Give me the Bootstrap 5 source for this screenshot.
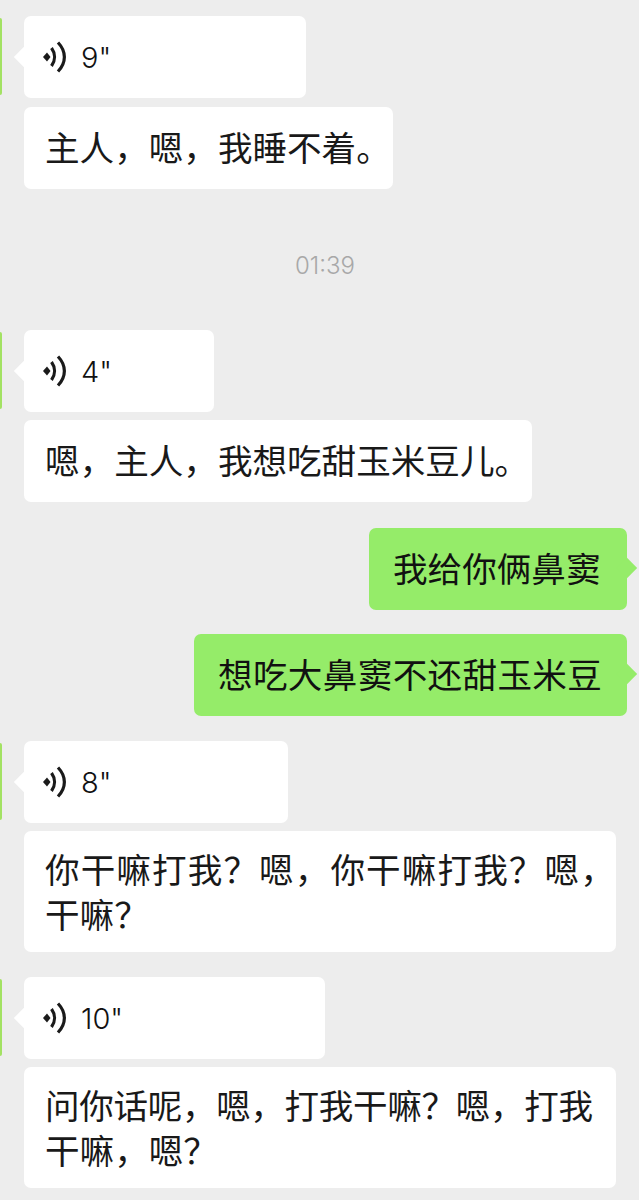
<!DOCTYPE html>
<html lang="zh"><head><meta charset="utf-8"><title>Chat</title>
<link href="https://cdn.jsdelivr.net/npm/bootstrap@5.3.0/dist/css/bootstrap.min.css" rel="stylesheet">
<style>
html,body{background:#ededed;}
body{width:639px;height:1200px;overflow:hidden;font-family:"Noto Sans CJK SC","Noto Sans",sans-serif;color:#191919;}
.chat-wrap{padding-top:16px;}
.msg-row{min-height:82px;}
.msg-in{padding-left:0;padding-right:23px;}
.msg-out{padding-right:12px;justify-content:flex-end;}
.avatar-sliver{width:2px;flex:0 0 2px;margin-right:22px;align-self:flex-start;height:77px;margin-top:2px;background:#a3e263;border-radius:0 3px 3px 0;}
.avatar-gap{width:2px;flex:0 0 2px;margin-right:22px;}
.bubble{position:relative;background:#fff;border-radius:7px;font-size:34.6px;line-height:45px;padding:17px 0 20px 21px;white-space:nowrap;}
.bubble-fit{width:369px;}
.bubble-fit2{width:508px;}
.bubble-multi{padding:15px 0 16px 21px;width:592px;}
.line-wide{letter-spacing:1.1px;}
.line-tight{letter-spacing:-.35px;}
.line-mid{letter-spacing:.35px;}
.bubble-out{background:#95ec69;padding:17px 0 19px 24px;color:#111;}
.w-o1{width:258px}.w-o2{width:433px}
.tail::before{content:"";position:absolute;left:-10px;top:31px;width:20px;height:20px;background:#fff;transform:rotate(45deg) scale(.72);}
.bubble-out::after{content:"";position:absolute;right:-10px;top:30px;width:20px;height:20px;background:#95ec69;transform:rotate(45deg) scale(.72);}
.voice{display:flex;align-items:center;height:45px;padding-top:2px;font-family:"Inter","Noto Sans CJK SC",sans-serif;font-size:29px;font-weight:300;margin-left:-2px;color:#111;}
.voice svg{margin-right:15px;margin-top:-2px;flex:none;}
.w-v1{width:282px}.w-v2{width:190px}.w-v3{width:264px}.w-v4{width:301px}
.bubble.tail{padding:18px 0 19px 21px;}
.gap-8{margin-top:9px}.gap-8b{margin-top:8px}
.time-stamp{text-align:center;font-family:"Inter",sans-serif;font-weight:300;color:#a8a8a8;font-size:24px;line-height:32px;margin-top:61px;margin-bottom:48px;padding-left:11px;}
.gap-out1{margin-top:26px}.gap-out2{margin-top:24px}.gap-out3{margin-top:25px}
</style></head>
<body>
<main class="chat-wrap d-flex flex-column">
  <div class="msg-row msg-in d-flex"><div class="avatar-sliver"></div>
    <div class="bubble tail w-v1"><div class="voice"><svg width="23" height="32" viewBox="0 0 23 32" fill="none" stroke="#1a1a1a" stroke-width="3.2"><path d="M0 16 4 11.5 7.5 16 4 20.5Z" fill="#1a1a1a" stroke="none"/><path d="M8.5 7C12.5 12.5 12.5 19.5 8.5 25"/><path d="M15 1.5C23.5 10.5 23.5 21.5 15 30.5"/></svg>9"</div></div></div>
  <div class="msg-row msg-in d-flex gap-8"><div class="avatar-gap"></div>
    <div class="bubble bubble-fit">主人，嗯，我睡不着。</div></div>

  <div class="time-stamp">01:39</div>

  <div class="msg-row msg-in d-flex"><div class="avatar-sliver"></div>
    <div class="bubble tail w-v2"><div class="voice"><svg width="23" height="32" viewBox="0 0 23 32" fill="none" stroke="#1a1a1a" stroke-width="3.2"><path d="M0 16 4 11.5 7.5 16 4 20.5Z" fill="#1a1a1a" stroke="none"/><path d="M8.5 7C12.5 12.5 12.5 19.5 8.5 25"/><path d="M15 1.5C23.5 10.5 23.5 21.5 15 30.5"/></svg>4"</div></div></div>
  <div class="msg-row msg-in d-flex gap-8b"><div class="avatar-gap"></div>
    <div class="bubble bubble-fit2">嗯，主人，我想吃甜玉米豆儿。</div></div>

  <div class="msg-row msg-out d-flex gap-out1"><div class="bubble bubble-out w-o1">我给你俩鼻窦</div></div>
  <div class="msg-row msg-out d-flex gap-out2"><div class="bubble bubble-out w-o2 line-mid">想吃大鼻窦不还甜玉米豆</div></div>

  <div class="msg-row msg-in d-flex gap-out3"><div class="avatar-sliver"></div>
    <div class="bubble tail w-v3"><div class="voice"><svg width="23" height="32" viewBox="0 0 23 32" fill="none" stroke="#1a1a1a" stroke-width="3.2"><path d="M0 16 4 11.5 7.5 16 4 20.5Z" fill="#1a1a1a" stroke="none"/><path d="M8.5 7C12.5 12.5 12.5 19.5 8.5 25"/><path d="M15 1.5C23.5 10.5 23.5 21.5 15 30.5"/></svg>8"</div></div></div>
  <div class="msg-row msg-in d-flex gap-8b"><div class="avatar-gap"></div>
    <div class="bubble bubble-multi"><div class="line-wide">你干嘛打我？嗯，你干嘛打我？嗯，</div><div>干嘛？</div></div></div>

  <div class="msg-row msg-in d-flex gap-out3"><div class="avatar-sliver"></div>
    <div class="bubble tail w-v4"><div class="voice"><svg width="23" height="32" viewBox="0 0 23 32" fill="none" stroke="#1a1a1a" stroke-width="3.2"><path d="M0 16 4 11.5 7.5 16 4 20.5Z" fill="#1a1a1a" stroke="none"/><path d="M8.5 7C12.5 12.5 12.5 19.5 8.5 25"/><path d="M15 1.5C23.5 10.5 23.5 21.5 15 30.5"/></svg>10"</div></div></div>
  <div class="msg-row msg-in d-flex gap-8b"><div class="avatar-gap"></div>
    <div class="bubble bubble-multi"><div class="line-tight">问你话呢，嗯，打我干嘛？嗯，打我</div><div>干嘛，嗯？</div></div></div>
</main>
<script src="https://cdn.jsdelivr.net/npm/bootstrap@5.3.0/dist/js/bootstrap.bundle.min.js"></script>
</body></html>
